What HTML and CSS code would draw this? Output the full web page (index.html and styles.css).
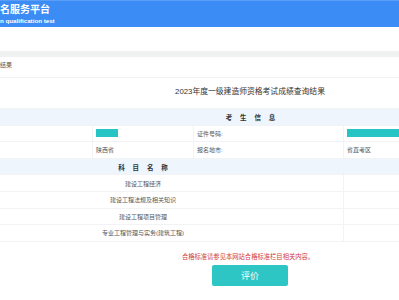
FILE: index.html
```html
<!DOCTYPE html>
<html lang="zh-CN">
<head>
  <meta charset="UTF-8">
  <title>成绩查询结果</title>
  <link rel="stylesheet" href="styles.css">
</head>
<body>
  <div class="top-bar">
    <div class="site-name">名服务平台</div>
    <div class="site-sub">n qualification test</div>
  </div>

  <div class="gap"></div>
  <div class="strip"></div>

  <div class="crumb">结果</div>

  <div class="content">
    <div class="page-title">2023年度一级建造师资格考试成绩查询结果</div>

    <table class="score-table">
      <colgroup>
        <col class="c1"><col class="c2"><col class="c3"><col class="c4">
      </colgroup>
      <tr class="head-row">
        <td colspan="4" class="head">考 生 信 息</td>
      </tr>
      <tr>
        <td></td>
        <td><span class="mask short"></span></td>
        <td>证件号码:</td>
        <td><span class="mask long"></span></td>
      </tr>
      <tr>
        <td></td>
        <td>陕西省</td>
        <td>报名地市:</td>
        <td>省直考区</td>
      </tr>
      <tr class="head-row">
        <td colspan="3" class="head center">科 目 名 称</td>
        <td></td>
      </tr>
      <tr>
        <td colspan="3" class="center">建设工程经济</td>
        <td></td>
      </tr>
      <tr>
        <td colspan="3" class="center">建设工程法规及相关知识</td>
        <td></td>
      </tr>
      <tr>
        <td colspan="3" class="center">建设工程项目管理</td>
        <td></td>
      </tr>
      <tr>
        <td colspan="3" class="center">专业工程管理与实务(建筑工程)</td>
        <td></td>
      </tr>
    </table>

    <div class="note">合格标准请参见本网站合格标准栏目相关内容。</div>
    <div class="btn-wrap">
      <button class="rate-btn">评价</button>
    </div>
  </div>
</body>
</html>
```

FILE: styles.css
```css
body {
  margin: 0;
  width: 399px;
  height: 300px;
  overflow: hidden;
  background: #fff;
  font-family: "Liberation Sans", "Noto Sans CJK SC", sans-serif;
  color: #555;
}

.top-bar {
  height: 27px;
  background: #3b8cf5;
  border-top: 1px solid #5a9ef7;
  box-sizing: border-box;
  color: #fff;
  overflow: hidden;
}

.site-name {
  font-size: 10px;
  font-weight: bold;
  line-height: 12px;
  margin-top: 3px;
}

.site-sub {
  font-size: 6.2px;
  font-weight: bold;
  line-height: 7px;
  margin-top: 1px;
}

.gap {
  height: 24px;
}

.strip {
  height: 6px;
  background: #f0f1f1;
}

.crumb {
  height: 20px;
  line-height: 16px;
  font-size: 6px;
  color: #555;
  border-bottom: 1px solid #f2f2f2;
}

.content {
  margin-left: -58px;
  width: 616px;
}

.page-title {
  height: 30px;
  line-height: 27px;
  text-align: center;
  font-size: 7.8px;
  color: #333;
}

.score-table {
  width: 616px;
  border-collapse: collapse;
  table-layout: fixed;
  font-size: 6px;
}

.c1 { width: 150px; }
.c2 { width: 101px; }
.c3 { width: 150px; }
.c4 { width: 215px; }

.score-table td {
  height: 16.6px;
  padding: 0 0 0 3px;
  border: 1px solid #f1f3f5;
  box-sizing: border-box;
  white-space: nowrap;
  vertical-align: middle;
}

.head-row td {
  background: #eef5fd;
}

.score-table td.head {
  text-align: center;
  font-weight: bold;
  color: #333;
  font-size: 6.5px;
  letter-spacing: 3px;
  padding-left: 3px;
}

.score-table td.center {
  text-align: center;
  padding-left: 0;
}

.score-table td.head.center {
  padding-left: 3px;
}

.mask {
  display: inline-block;
  height: 8px;
  background: #27c4c6;
  vertical-align: middle;
}

.mask.short { width: 22px; }
.mask.long { width: 60px; }

.note {
  margin-top: 11px;
  text-align: center;
  font-size: 6.3px;
  color: #d0393b;
  line-height: 8px;
  padding-right: 4px;
}

.btn-wrap {
  text-align: center;
  margin-top: 4px;
}

.rate-btn {
  width: 76px;
  height: 21px;
  border: none;
  border-radius: 2px;
  background: #2ec5c5;
  color: #fff;
  font-family: "Noto Sans CJK SC", sans-serif;
  font-size: 9px;
}
```
